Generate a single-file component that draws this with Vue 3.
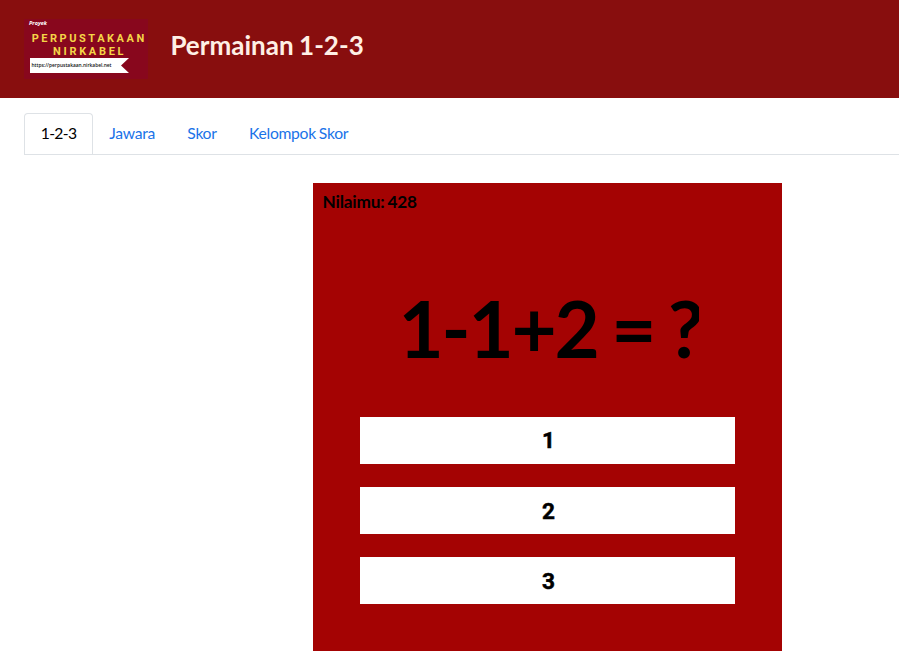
<script setup>
import { ref } from 'vue'

const tabs = ['1-2-3', 'Jawara', 'Skor', 'Kelompok Skor']
const activeTab = ref(0)
const score = ref(428)
const question = ref('1-1+2 = ?')
const answers = [1, 2, 3]
</script>

<template>
  <div class="page">
    <header class="header">
      <svg class="logo" width="124" height="62" viewBox="0 0 124 62" role="img">
        <rect y="1" width="124" height="60" fill="#88071d" />
        <text class="logo-small" x="5" y="7" textLength="18" lengthAdjust="spacingAndGlyphs">Proyek</text>
        <text class="logo-name" x="7.7" y="24.4" textLength="112.5">PERPUSTAKAAN</text>
        <text class="logo-name" x="29" y="37.2" textLength="70.5">NIRKABEL</text>
        <path d="M6 40H105L97 47.5L105 55H6Z" fill="#fff" />
        <text class="logo-url" x="7.5" y="49.2" textLength="80" lengthAdjust="spacingAndGlyphs">https://perpustakaan.nirkabel.net</text>
      </svg>
      <h1 class="title">Permainan 1-2-3</h1>
    </header>
    <nav class="tabs">
      <a
        v-for="(tab, i) in tabs"
        :key="tab"
        class="tab"
        :class="{ active: i === activeTab }"
        @click="activeTab = i"
      >{{ tab }}</a>
    </nav>
    <main class="board">
      <div class="score">Nilaimu: {{ score }}</div>
      <div class="question"><span class="formula">{{ question }}</span></div>
      <div class="answers">
        <button v-for="answer in answers" :key="answer" class="answer">{{ answer }}</button>
      </div>
    </main>
  </div>
</template>

<style>
body {
  overflow: hidden;
  background: #fff;
}
</style>

<style scoped>
.page {
  height: 661px;
  font-family: Lato, sans-serif;
  overflow: hidden;
}
.header {
  display: flex;
  box-sizing: border-box;
  height: 98px;
  padding: 18px 24px;
  gap: 22.4px;
  background: #880e0e;
}
.logo {
  flex: none;
}
.logo-small {
  font: italic bold 5px "Open Sans", sans-serif;
  fill: #fff;
}
.logo-name {
  font: bold 11px Roboto, sans-serif;
  fill: #f5d547;
}
.logo-url {
  font: 600 5.2px "Open Sans", sans-serif;
  fill: #111;
}
.title {
  margin: 11px 0 0;
  font-size: 26px;
  line-height: 32px;
  font-weight: bold;
  word-spacing: -0.8px;
  color: #ffefe5;
  white-space: nowrap;
}
.tabs {
  display: flex;
  box-sizing: border-box;
  height: 42px;
  margin: 15px 0 0 24px;
  border-bottom: 1px solid #dee2e6;
}
.tab {
  box-sizing: border-box;
  height: 41px;
  padding: 7px 15.2px;
  border: 1px solid transparent;
  border-bottom: 0;
  font-size: 15.7px;
  line-height: 24px;
  letter-spacing: -0.3px;
  word-spacing: -0.7px;
  color: #1a73e8;
  cursor: pointer;
  white-space: nowrap;
}
.tab.active {
  padding: 7px 15.7px;
  border-color: #dee2e6;
  border-radius: 4px 4px 0 0;
  background: #fff;
  color: #000;
  letter-spacing: -0.65px;
}
.board {
  box-sizing: border-box;
  width: 469px;
  height: 468px;
  margin: 28px 0 0 313px;
  padding: 9px 0 0;
  background: #a40303;
  color: #000;
}
.score {
  padding-left: 9.5px;
  font-size: 17.2px;
  line-height: 20px;
  font-weight: bold;
  letter-spacing: -0.17px;
  word-spacing: -1px;
}
.question {
  height: 120px;
  margin: 56px 0 2px;
  padding-left: 85.5px;
  font-size: 78px;
  line-height: 120px;
  font-weight: bold;
  letter-spacing: -2.2px;
  word-spacing: -3px;
  white-space: pre;
}
.formula {
  display: block;
  width: 300px;
  overflow: hidden;
}
.answers {
  display: flex;
  flex-direction: column;
  gap: 23.4px;
  padding: 27px 47px 0;
}
.answer {
  height: 46.8px;
  padding: 1px 0 0 2px;
  border: 0;
  background: #fff;
  color: #000;
  font: bold 22.6px Roboto, "Liberation Sans", sans-serif;
  -webkit-text-stroke: 0.5px #000;
}
</style>
